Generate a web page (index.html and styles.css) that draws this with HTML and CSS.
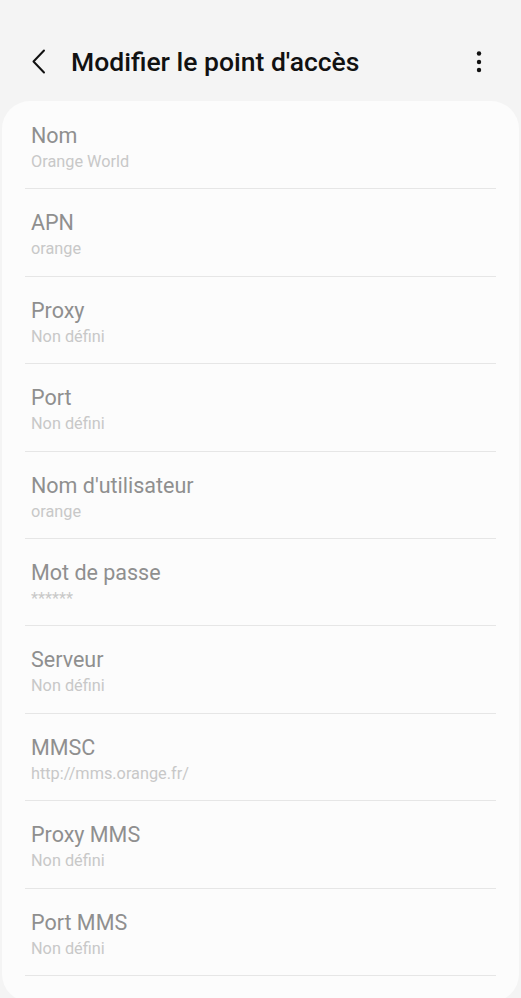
FILE: index.html
```html
<!DOCTYPE html>
<html lang="fr">
<head>
    <meta charset="UTF-8">
    <meta name="viewport" content="width=device-width, initial-scale=1.0">
    <title>Modifier le point d'accès</title>
    <link rel="stylesheet" href="styles.css">
</head>
<body>
    <header class="app-bar">
        <button class="icon-btn back" aria-label="Retour">
            <svg width="16" height="26" viewBox="0 0 16 26">
                <path d="M13 1.5 L2.5 12.5 L13 23.5" fill="none" stroke="#111" stroke-width="2" stroke-linecap="round" stroke-linejoin="round"/>
            </svg>
        </button>
        <h1 class="title">Modifier le point d'accès</h1>
        <button class="icon-btn more" aria-label="Plus d'options">
            <svg width="6" height="24" viewBox="0 0 6 24">
                <circle cx="3" cy="3.5" r="2.2" fill="#111"/>
                <circle cx="3" cy="12" r="2.2" fill="#111"/>
                <circle cx="3" cy="20" r="2.2" fill="#111"/>
            </svg>
        </button>
    </header>

    <main class="card">
        <div class="row">
            <div class="label">Nom</div>
            <div class="value">Orange World</div>
        </div>
        <div class="row">
            <div class="label">APN</div>
            <div class="value">orange</div>
        </div>
        <div class="row">
            <div class="label">Proxy</div>
            <div class="value">Non défini</div>
        </div>
        <div class="row">
            <div class="label">Port</div>
            <div class="value">Non défini</div>
        </div>
        <div class="row">
            <div class="label">Nom d'utilisateur</div>
            <div class="value">orange</div>
        </div>
        <div class="row">
            <div class="label">Mot de passe</div>
            <div class="value">******</div>
        </div>
        <div class="row">
            <div class="label">Serveur</div>
            <div class="value">Non défini</div>
        </div>
        <div class="row">
            <div class="label">MMSC</div>
            <div class="value">http://mms.orange.fr/</div>
        </div>
        <div class="row">
            <div class="label">Proxy MMS</div>
            <div class="value">Non défini</div>
        </div>
        <div class="row">
            <div class="label">Port MMS</div>
            <div class="value">Non défini</div>
        </div>
    </main>
</body>
</html>
```

FILE: styles.css
```css
body {
    margin: 0;
    background-color: #f4f4f4;
    font-family: Roboto, "Noto Sans", sans-serif;
    overflow: hidden;
}

.app-bar {
    height: 101px;
    display: flex;
    align-items: center;
    padding: 22px 0 0 31px;
    box-sizing: border-box;
}

.icon-btn {
    background: none;
    border: none;
    padding: 0;
    display: flex;
    align-items: center;
    cursor: pointer;
}

.title {
    margin: 0 0 0 24px;
    font-size: 26.5px;
    font-weight: 500;
    color: #111;
    flex: 1;
}

.more {
    margin: 0 39px 0 0;
}

.card {
    background-color: #fcfcfc;
    margin: 0 2px;
    border-radius: 28px;
    height: 900px;
    padding: 1px 23px 0;
}

.row {
    height: 87.4px;
    box-sizing: border-box;
    border-bottom: 1.5px solid #e6e6e6;
    padding: 21px 0 0 6px;
}

.label {
    font-size: 21.5px;
    line-height: 26px;
    color: #8f8f8f;
}

.value {
    font-size: 16.3px;
    line-height: 20px;
    margin-top: 3px;
    color: #c8c8c8;
}
```
